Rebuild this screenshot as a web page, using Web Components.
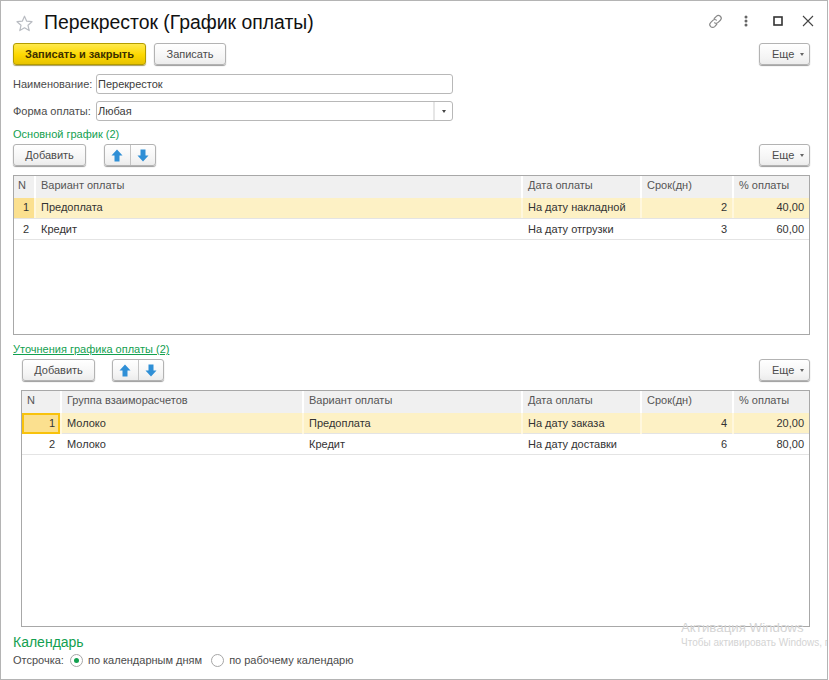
<!DOCTYPE html>
<html lang="ru">
<head>
<meta charset="utf-8">
<title>Перекресток (График оплаты)</title>
<style>
	html, body { margin: 0; padding: 0; background: #fff; }
	body { font: 11px "Liberation Sans", Arial, sans-serif; color: #4b4b4b; }
</style>
</head>
<body>
<pay-window>
	<pay-title slot="title" text="Перекресток (График оплаты)"></pay-title>

	<pay-bar gap="8">
		<pay-button primary w="133">Записать и закрыть</pay-button>
		<pay-button w="72">Записать</pay-button>
		<pay-more></pay-more>
	</pay-bar>

	<pay-field label="Наименование:" value="Перекресток" style="margin-top:9px"></pay-field>
	<pay-field label="Форма оплаты:" value="Любая" select style="margin-top:7px"></pay-field>

	<pay-caption style="margin-top:6px">Основной график (2)</pay-caption>
	<pay-bar gap="18" style="margin-top:3px">
		<pay-button w="73">Добавить</pay-button>
		<pay-arrows></pay-arrows>
		<pay-more></pay-more>
	</pay-bar>
	<pay-table id="main" style="margin-top:9px;height:160px;--lh1:19px;--lh2:20px;--npad:4px"></pay-table>

	<pay-caption link style="margin-top:7px">Уточнения графика оплаты (2)</pay-caption>
	<pay-bar gap="17" style="margin:3px 0 0 9px">
		<pay-button w="73">Добавить</pay-button>
		<pay-arrows></pay-arrows>
		<pay-more></pay-more>
	</pay-bar>
	<pay-table id="detail" style="margin:9px 0 0 8px;height:237px;--lh1:21px;--lh2:21px;--npad:5px"></pay-table>

	<pay-caption big style="margin-top:7px">Календарь</pay-caption>
	<pay-radios label="Отсрочка:" style="margin-top:1px"></pay-radios>

	<pay-watermark slot="over"></pay-watermark>
</pay-window>

<script>
class PayWindow extends HTMLElement {
	constructor() {
		super();
		this.attachShadow({ mode: 'open' });
		this.shadowRoot.innerHTML = `
			<style>
				:host {
					display: block;
					position: relative;
					box-sizing: border-box;
					width: 828px;
					height: 680px;
					border: 1px solid #b4b4b4;
					overflow: hidden;
					background: #fff;
				}
				.body {
					display: flex;
					flex-direction: column;
					padding: 0 17px 0 12px;
				}
			</style>
			<slot name="title"></slot>
			<div class="body"><slot></slot></div>
			<slot name="over"></slot>
		`;
	}
}

class PayTitle extends HTMLElement {
	constructor() {
		super();
		this.attachShadow({ mode: 'open' });
		this.shadowRoot.innerHTML = `
			<style>
				:host {
					display: flex;
					align-items: center;
					box-sizing: border-box;
					height: 42px;
					padding: 2px 13px 0 15px;
				}
				.star { width: 17px; height: 17px; margin-right: 11px; }
				h1 {
					flex: 1;
					margin: 0;
					font: 19.4px "Liberation Sans", Arial, sans-serif;
					color: #111;
					position: relative;
					top: -1px;
				}
				.tools { display: flex; align-items: center; position: relative; top: -2px; }
				.tools svg { display: block; }
			</style>
			<svg class="star" viewBox="0 0 17 17">
				<path d="M8.5 1.2l2.2 5 5.3.5-4 3.6 1.2 5.3-4.7-2.8-4.7 2.8 1.2-5.3-4-3.6 5.3-.5z" fill="none" stroke="#b9bcc2" stroke-width="1.2" stroke-linejoin="round"/>
			</svg>
			<h1></h1>
			<div class="tools">
				<svg width="17" height="17" viewBox="0 0 16 16" style="margin-right:20px" fill="none" stroke="#8a8a8a" stroke-width="1.1" stroke-linecap="round">
					<path d="M6.8 5.2l2-2.1a2.6 2.6 0 0 1 3.8 3.7l-2.1 2.1a2.6 2.6 0 0 1-3.4.3"/>
					<path d="M9.2 10.6l-2 2.2a2.6 2.6 0 0 1-3.8-3.7l2.1-2.1a2.6 2.6 0 0 1 3.4-.3"/>
				</svg>
				<svg width="4" height="12" viewBox="0 0 4 12" style="margin-right:25px" fill="#666">
					<circle cx="2" cy="2" r="1.5"/><circle cx="2" cy="6" r="1.5"/><circle cx="2" cy="10" r="1.5"/>
				</svg>
				<svg width="10" height="10" viewBox="0 0 10 10" style="margin-right:19px" fill="none" stroke="#333" stroke-width="1.6">
					<rect x="1" y="1" width="8" height="8"/>
				</svg>
				<svg width="12" height="12" viewBox="0 0 12 12" fill="none" stroke="#444" stroke-width="1.1">
					<path d="M1 1l10 10M11 1L1 11"/>
				</svg>
			</div>
		`;
	}

	connectedCallback() {
		this.shadowRoot.querySelector('h1').textContent = this.getAttribute('text');
	}
}

class PayBar extends HTMLElement {
	constructor() {
		super();
		this.attachShadow({ mode: 'open' });
		this.shadowRoot.innerHTML = `
			<style>
				:host { display: flex; align-items: center; height: 22px; }
				::slotted(pay-more) { margin-left: auto; }
			</style>
			<slot></slot>
		`;
	}

	connectedCallback() {
		this.style.gap = this.getAttribute('gap') + 'px';
	}
}

class PayButton extends HTMLElement {
	constructor() {
		super();
		this.attachShadow({ mode: 'open' });
		this.shadowRoot.innerHTML = `
			<style>
				:host {
					display: flex;
					align-items: center;
					justify-content: center;
					box-sizing: border-box;
					height: 22px;
					border: 1px solid #b3b3b3;
					border-radius: 3px;
					background: linear-gradient(#fff, #f4f4f4 70%, #ececec);
					box-shadow: 0 1px 1px #9c9c9c;
					color: #4b4b4b;
					white-space: nowrap;
				}
				:host([primary]) {
					border-color: #b39c00;
					background: linear-gradient(#ffe94d, #fdd800 55%, #e8c300);
					box-shadow: 0 1px 1px #a59a60;
					color: #3c3000;
					font-weight: bold;
				}
			</style>
			<slot></slot>
		`;
	}

	connectedCallback() {
		this.style.width = this.getAttribute('w') + 'px';
	}
}

class PayMore extends HTMLElement {
	constructor() {
		super();
		this.attachShadow({ mode: 'open' });
		this.shadowRoot.innerHTML = `
			<style>
				:host {
					display: flex;
					align-items: center;
					box-sizing: border-box;
					width: 51px;
					height: 22px;
					padding-left: 12px;
					border: 1px solid #b3b3b3;
					border-radius: 3px;
					background: linear-gradient(#fff, #f4f4f4 70%, #ececec);
					box-shadow: 0 1px 1px #9c9c9c;
					color: #4b4b4b;
				}
				i {
					width: 0;
					height: 0;
					margin-left: 6px;
					border: 2px solid transparent;
					border-top: 3px solid #666;
					border-bottom: 0;
				}
			</style>
			<span>Еще</span><i></i>
		`;
	}
}

class PayArrows extends HTMLElement {
	constructor() {
		super();
		this.attachShadow({ mode: 'open' });
		this.shadowRoot.innerHTML = `
			<style>
				:host {
					display: flex;
					box-sizing: border-box;
					width: 52px;
					height: 22px;
					border: 1px solid #b3b3b3;
					border-radius: 3px;
					background: linear-gradient(#fff, #f4f4f4 70%, #ececec);
					box-shadow: 0 1px 1px #9c9c9c;
				}
				div { flex: 1; display: flex; align-items: center; justify-content: center; }
				div + div { border-left: 1px solid #c4c4c4; }
			</style>
			<div><svg width="12" height="13" viewBox="0 0 12 13"><path d="M6 .5L11.5 6.5H8.5V12.5H3.5V6.5H.5z" fill="#2f8fd6"/></svg></div>
			<div><svg width="12" height="13" viewBox="0 0 12 13"><path d="M6 12.5L11.5 6.5H8.5V.5H3.5V6.5H.5z" fill="#2f8fd6"/></svg></div>
		`;
	}
}

class PayField extends HTMLElement {
	constructor() {
		super();
		this.attachShadow({ mode: 'open' });
		this.shadowRoot.innerHTML = `
			<style>
				:host { display: flex; align-items: center; height: 20px; }
				label { width: 83px; white-space: nowrap; }
				.input {
					display: flex;
					align-items: stretch;
					box-sizing: border-box;
					width: 357px;
					height: 20px;
					border: 1px solid #b8b8b8;
					border-radius: 3px;
					line-height: 18px;
					color: #3c3c3c;
				}
				.value { flex: 1; padding-left: 1px; }
				.drop {
					display: none;
					align-items: center;
					justify-content: center;
					width: 17px;
					border-left: 2px solid #e6e6e6;
				}
				.drop i {
					width: 0;
					height: 0;
					border: 2.5px solid transparent;
					border-top: 3px solid #444;
					border-bottom: 0;
				}
				:host([select]) .drop { display: flex; }
			</style>
			<label></label>
			<div class="input"><span class="value"></span><span class="drop"><i></i></span></div>
		`;
	}

	connectedCallback() {
		this.shadowRoot.querySelector('label').textContent = this.getAttribute('label');
		this.shadowRoot.querySelector('.value').textContent = this.getAttribute('value');
	}
}

class PayCaption extends HTMLElement {
	constructor() {
		super();
		this.attachShadow({ mode: 'open' });
		this.shadowRoot.innerHTML = `
			<style>
				:host { display: block; height: 14px; line-height: 14px; color: #12a04f; }
				:host([link]) { text-decoration: underline; }
				:host([big]) { height: 16px; line-height: 16px; font-size: 14px; }
			</style>
			<slot></slot>
		`;
	}
}

class PayTable extends HTMLElement {
	constructor() {
		super();
		this.attachShadow({ mode: 'open' });
		this.shadowRoot.innerHTML = `
			<style>
				:host {
					display: block;
					box-sizing: border-box;
					border: 1px solid #a8a8a8;
					overflow: hidden;
				}
				.row { display: grid; box-sizing: border-box; }
				.head { height: 22px; background: #f0f0f0; }
				.head div {
					line-height: 18px;
					padding: 0 5px;
					border-right: 2px solid #fff;
					color: #555;
					text-align: left;
				}
				.head div:last-child { border-right: 0; }
				.line { height: 21px; border-bottom: 1px solid #e4e4e4; }
				.line div {
					line-height: var(--lh1);
					padding: 0 5px;
					color: #333;
					white-space: nowrap;
					border-right: 2px solid transparent;
				}
				.sel ~ .line div { line-height: var(--lh2); }
				.line div:last-child { border-right: 0; }
				.num { text-align: right; }
				.sel { background: #fdf1c5; }
				.sel div { border-right-color: #fff7dd; }
				.sel .mark { background: #fbe08f; }
				.sel .cur {
					background: #fbe08f;
					box-shadow: inset 0 0 0 2px #f8c20c;
				}
				.head .n { padding-left: var(--npad); }
			</style>
			<div class="rows"></div>
		`;
	}

	// cols: [{t: title, w: width, num: right aligned}], rows: array of arrays
	setData(cols, rows, selClass) {
		const tpl = cols.map(c => c.w + 'px').join(' ');
		let html = `<div class="row head" style="grid-template-columns:${tpl}">`;
		cols.forEach((c, i) => { html += `<div class="${i == 0 ? 'n' : ''}">${c.t}</div>`; });
		html += '</div>';
		rows.forEach((r, ri) => {
			html += `<div class="row line ${ri == 0 ? 'sel' : ''}" style="grid-template-columns:${tpl}">`;
			r.forEach((v, i) => {
				let cl = cols[i].num ? 'num' : '';
				if (i == 0 && ri == 0) cl += ' ' + selClass;
				html += `<div class="${cl}">${v}</div>`;
			});
			html += '</div>';
		});
		this.shadowRoot.querySelector('.rows').innerHTML = html;
	}
}

class PayRadios extends HTMLElement {
	constructor() {
		super();
		this.attachShadow({ mode: 'open' });
		this.shadowRoot.innerHTML = `
			<style>
				:host { display: flex; align-items: center; height: 18px; }
				i {
					display: flex;
					align-items: center;
					justify-content: center;
					box-sizing: border-box;
					width: 13px;
					height: 13px;
					margin: 0 5px 0 6px;
					border: 1px solid #a6a6a6;
					border-radius: 50%;
				}
				i.on::after {
					content: '';
					width: 5px;
					height: 5px;
					border-radius: 50%;
					background: #12a04f;
				}
				.second { margin-left: 9px; }
			</style>
			<span class="label"></span>
			<i class="on"></i><span>по календарным дням</span>
			<i class="second"></i><span>по рабочему календарю</span>
		`;
	}

	connectedCallback() {
		this.shadowRoot.querySelector('.label').textContent = this.getAttribute('label');
	}
}

class PayWatermark extends HTMLElement {
	constructor() {
		super();
		this.attachShadow({ mode: 'open' });
		this.shadowRoot.innerHTML = `
			<style>
				:host {
					position: absolute;
					left: 680px;
					top: 619px;
					width: 147px;
					overflow: hidden;
					white-space: nowrap;
					color: #d4d4d4;
					pointer-events: none;
				}
				div { font-size: 13.3px; line-height: 15px; }
				small { display: block; font-size: 10px; line-height: 15px; }
			</style>
			<div>Активация Windows</div>
			<small>Чтобы активировать Windows, п</small>
		`;
	}
}

customElements.define('pay-window', PayWindow);
customElements.define('pay-title', PayTitle);
customElements.define('pay-bar', PayBar);
customElements.define('pay-button', PayButton);
customElements.define('pay-more', PayMore);
customElements.define('pay-arrows', PayArrows);
customElements.define('pay-field', PayField);
customElements.define('pay-caption', PayCaption);
customElements.define('pay-table', PayTable);
customElements.define('pay-radios', PayRadios);
customElements.define('pay-watermark', PayWatermark);

document.getElementById('main').setData(
	[
		{ t: 'N', w: 22, num: true },
		{ t: 'Вариант оплаты', w: 487 },
		{ t: 'Дата оплаты', w: 119 },
		{ t: 'Срок(дн)', w: 92, num: true },
		{ t: '% оплаты', w: 75, num: true }
	],
	[
		[1, 'Предоплата', 'На дату накладной', 2, '40,00'],
		[2, 'Кредит', 'На дату отгрузки', 3, '60,00']
	],
	'mark'
);

document.getElementById('detail').setData(
	[
		{ t: 'N', w: 40, num: true },
		{ t: 'Группа взаиморасчетов', w: 242 },
		{ t: 'Вариант оплаты', w: 219 },
		{ t: 'Дата оплаты', w: 119 },
		{ t: 'Срок(дн)', w: 92, num: true },
		{ t: '% оплаты', w: 75, num: true }
	],
	[
		[1, 'Молоко', 'Предоплата', 'На дату заказа', 4, '20,00'],
		[2, 'Молоко', 'Кредит', 'На дату доставки', 6, '80,00']
	],
	'cur'
);
</script>
</body>
</html>
